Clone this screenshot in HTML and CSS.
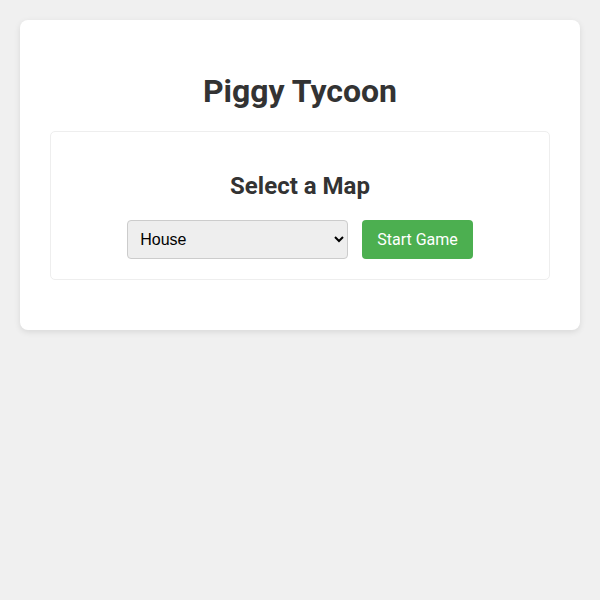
FILE: index.html
```html
<!DOCTYPE html>
<html>
<head>
<meta charset="utf-8">
<link rel="stylesheet" href="styles.css">
</head>
<body>
<div class="card">
  <h1 class="title">Piggy Tycoon</h1>
  <div class="panel">
    <h2 class="subtitle">Select a Map</h2>
    <div class="controls">
      <select class="map-select">
        <option>House</option>
        <option>School</option>
      </select>
      <button class="start-btn">Start Game</button>
    </div>
  </div>
</div>
</body>
</html>
```
FILE: styles.css
```css
html, body {
  margin: 0;
  padding: 0;
}
body {
  background: #f0f0f0;
  font-family: Roboto, "Liberation Sans", Arial, sans-serif;
  color: #333;
  padding: 20px;
}
.card {
  background: #fff;
  border-radius: 8px;
  box-shadow: 0 2px 6px rgba(0, 0, 0, 0.1);
  padding: 30px;
  text-align: center;
}
.title {
  font-size: 32px;
  font-weight: 700;
  margin: 22px 0 21px;
  line-height: 38px;
}
.panel {
  border: 1px solid #eee;
  border-radius: 5px;
  padding: 20px;
  margin-bottom: 20px;
}
.subtitle {
  font-size: 24px;
  font-weight: 700;
  margin: 20px 0;
  line-height: 28px;
}
.controls {
  display: flex;
  justify-content: center;
  align-items: center;
  gap: 14px;
}
.map-select {
  width: 221px;
  height: 39px;
  padding: 0 8px;
  font-family: "Liberation Sans", Arial, sans-serif;
  font-size: 16px;
  color: #000;
  background: #eee;
  border: 1px solid #ccc;
  border-radius: 4px;
}
.start-btn {
  height: 39px;
  padding: 0 15px;
  background: #4caf50;
  color: #fff;
  border: none;
  border-radius: 4px;
  font-family: Roboto, sans-serif;
  font-size: 16px;
}
```
